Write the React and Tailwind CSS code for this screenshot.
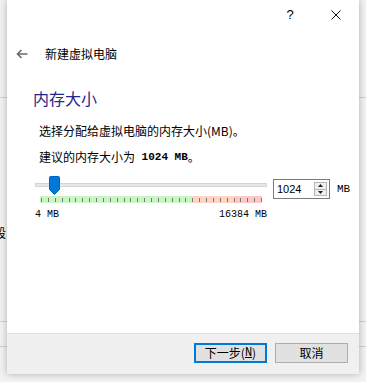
import React from "react";

function Thumb() {
  return (
    <svg width="11" height="19" viewBox="0 0 11 19" className="absolute left-[14px] top-0">
      <path d="M1.5 0.5 H9.5 Q10.5 0.5 10.5 1.5 V13.5 L5.5 18.5 L0.5 13.5 V1.5 Q0.5 0.5 1.5 0.5 Z" fill="#0078d7" stroke="#0067be" strokeWidth="1" />
    </svg>
  );
}

function TickBar() {
  const ticks = [];
  const n = 32;
  for (let i = 0; i <= n; i++) {
    ticks.push(i);
  }
  return (
    <div className="absolute left-[5px] top-[20px] w-[222px] h-[7px] flex">
      <div className="w-[151px] h-full bg-[#c9f4c3]" />
      <div className="w-[44px] h-full bg-[#fdd5c2]" />
      <div className="w-[27px] h-full bg-[#fcc7c7]" />
      <svg width="222" height="7" className="absolute left-0 top-0">
        {ticks.map((i) => {
          const x = Math.round(1 + (i * 220) / n) + 0.5;
          return <line key={i} x1={x} x2={x} y1={2} y2={6} stroke="#7a7a7a" strokeWidth="1" />;
        })}
      </svg>
    </div>
  );
}

export default function App() {
  const cjk = { fontFamily: '"Noto Sans CJK SC", "Noto Sans", sans-serif' };
  return (
    <div className="relative w-[366px] h-[382px] overflow-hidden bg-[#f2f2f2]" style={cjk}>
      <div className="absolute left-0 top-[97px] w-full h-px bg-[#cfcfcf]" />
      <div className="absolute left-0 top-[321px] w-full h-px bg-[#cfcfcf]" />
      <div className="absolute left-0 top-[346px] w-full h-px bg-[#cfcfcf]" />
      <div className="absolute left-[-6px] top-[224px] text-[12px] text-black">段</div>

      <div className="relative ml-[7px] w-[352px] h-[374px] bg-white shadow-[0_0_7px_rgba(0,0,0,0.28)] flex flex-col">
        <div className="h-[30px] flex justify-end">
          <div className="w-[46px] h-[30px] flex items-center justify-center text-[13px] text-black" style={{ fontFamily: '"Liberation Sans", sans-serif' }}>?</div>
          <div className="w-[46px] h-[30px] flex items-center justify-center">
            <svg width="10" height="10" viewBox="0 0 10 10">
              <path d="M0.5 0.5 L9.5 9.5 M9.5 0.5 L0.5 9.5" stroke="#111" strokeWidth="1" />
            </svg>
          </div>
        </div>

        <div className="mt-[14px] h-[20px] flex items-center">
          <svg width="12" height="10" viewBox="0 0 12 10" className="ml-[9px]">
            <path d="M11.5 5 H1.5 M5.5 1 L1.5 5 L5.5 9" stroke="#6b6b6b" strokeWidth="1.6" fill="none" />
          </svg>
          <span className="ml-[17px] text-[12px] leading-[20px] text-black">新建虚拟电脑</span>
        </div>

        <div className="mt-[23px] ml-[26px] text-[16px] leading-[22px] text-[#26268a]">内存大小</div>

        <div className="mt-[13px] ml-[32px] text-[12px] leading-[18px] text-black">
          选择分配给虚拟电脑的内存大小(MB)。
        </div>
        <div className="mt-[8px] ml-[32px] text-[12px] leading-[18px] text-black flex items-center">
          <span>建议的内存大小为 </span>
          <span className="font-bold text-[11px]" style={{ fontFamily: '"Liberation Mono", monospace' }}>&nbsp;1024 MB</span>
          <span>。</span>
        </div>

        <div className="mt-[10px] ml-[28px] flex">
          <div className="relative w-[232px] h-[30px]">
            <div className="absolute left-0 top-[7px] w-[232px] h-[4px] bg-[#e7e7e7] border border-[#d4d4d4]" />
            <Thumb />
            <TickBar />
          </div>
          <div className="ml-[6px] mt-[3px] w-[57px] h-[20px] border border-[#7a7a7a] flex items-center">
            <span className="ml-[3px] text-[11px] text-black flex-1" style={{ fontFamily: '"Liberation Sans", sans-serif' }}>1024</span>
            <div className="mr-[2px] w-[13px] h-[14px] flex flex-col border border-[#b5b5b5] bg-[#f0f0f0]">
              <div className="flex-1 flex items-center justify-center border-b border-[#b5b5b5]">
                <svg width="5" height="3" viewBox="0 0 5 3"><path d="M0 3 L2.5 0 L5 3 Z" fill="#222" /></svg>
              </div>
              <div className="flex-1 flex items-center justify-center">
                <svg width="5" height="3" viewBox="0 0 5 3"><path d="M0 0 L2.5 3 L5 0 Z" fill="#222" /></svg>
              </div>
            </div>
          </div>
          <span className="ml-[7px] mt-[3px] h-[20px] leading-[20px] text-[11px] text-black" style={{ fontFamily: '"Liberation Mono", monospace' }}>MB</span>
        </div>

        <div className="mt-[2px] ml-[28px] w-[232px] flex justify-between text-[10px] leading-[14px] text-black" style={{ fontFamily: '"Liberation Mono", monospace' }}>
          <span>4 MB</span>
          <span>16384 MB</span>
        </div>

        <div className="mt-auto h-[41px] bg-[#f0f0f0] border-t border-[#dfdfdf] flex justify-end items-start pt-[9px] pr-[11px] gap-[8px]">
          <div className="w-[73px] h-[20px] border-2 border-[#0078d7] bg-[#e1e1e1] flex items-center justify-center text-[12px] text-black">
            下一步(<span className="underline" style={{ fontFamily: '"Liberation Mono", monospace' }}>N</span>)
          </div>
          <div className="w-[73px] h-[20px] border border-[#adadad] bg-[#e1e1e1] flex items-center justify-center text-[12px] text-black">
            取消
          </div>
        </div>
      </div>
    </div>
  );
}
